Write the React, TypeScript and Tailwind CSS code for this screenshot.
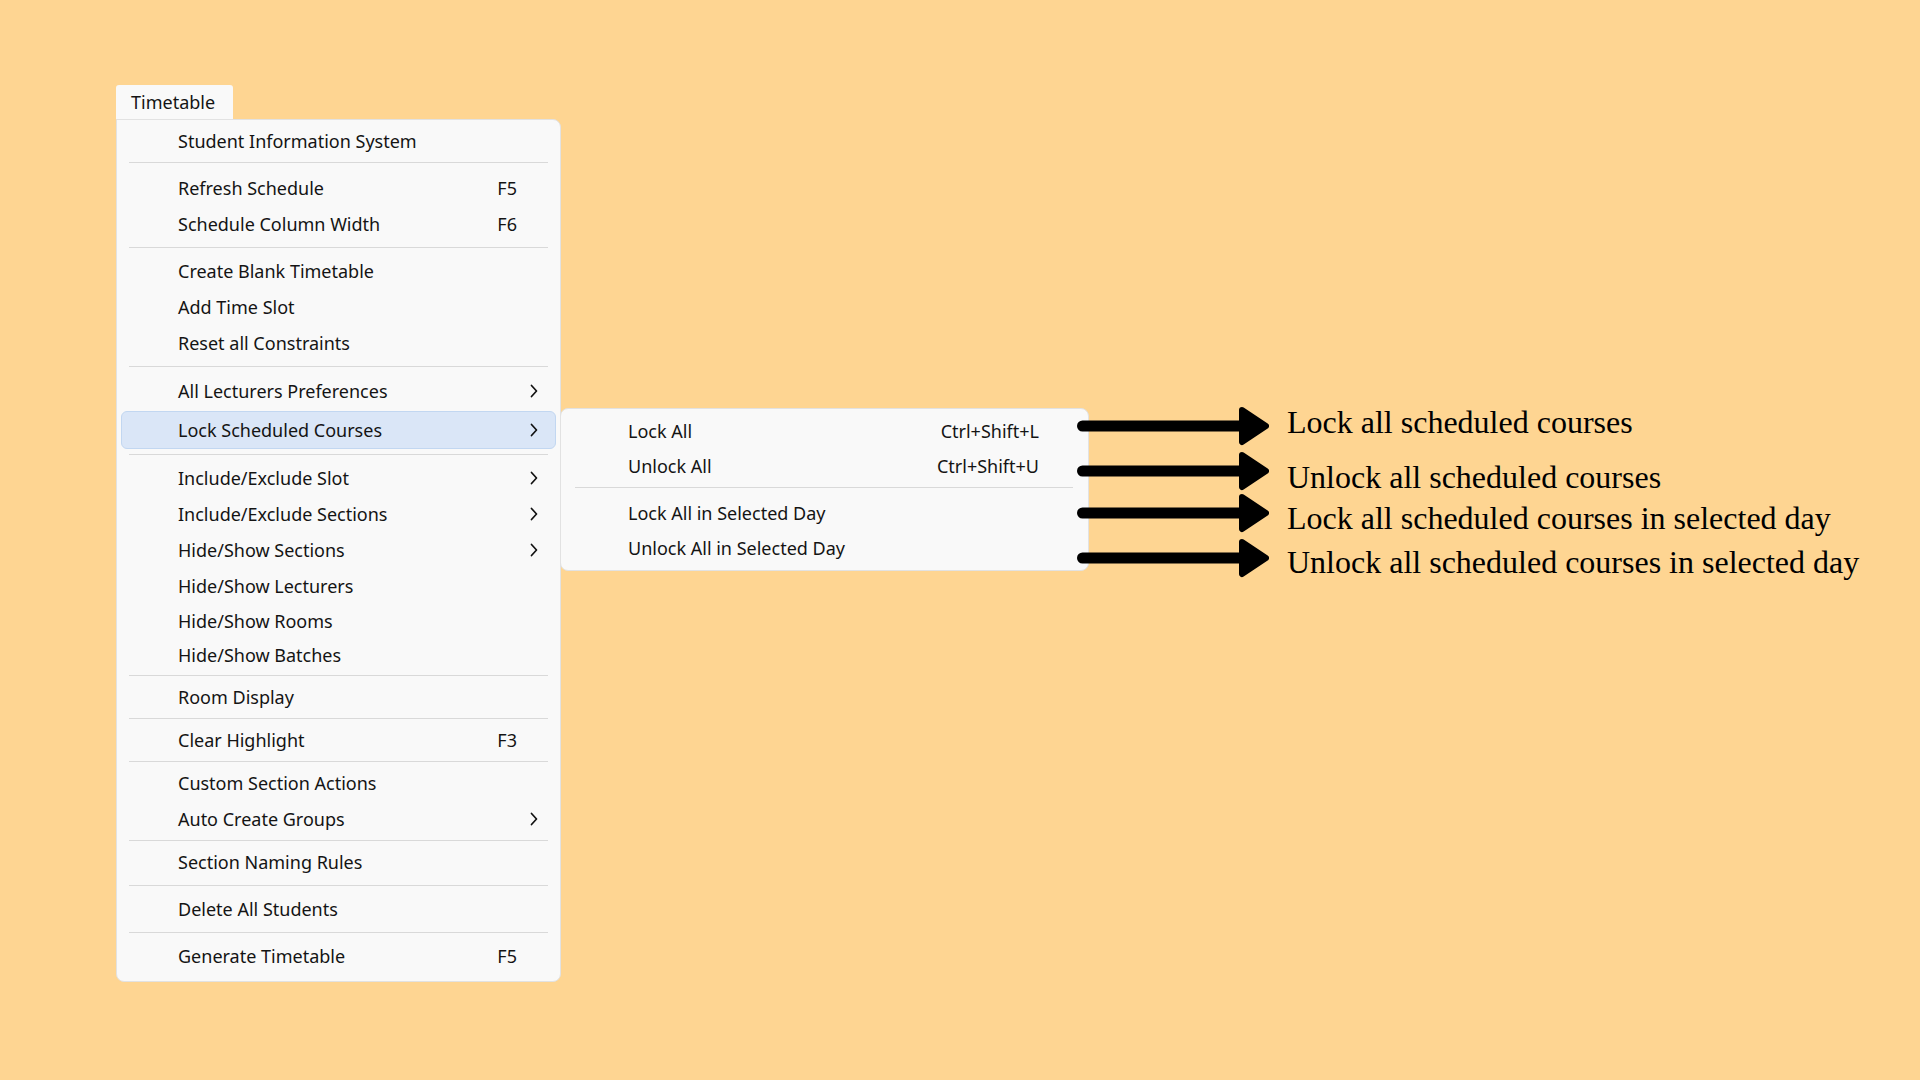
import React from "react";

type Entry =
  | { kind: "item"; label: string; h: string; shortcut?: string; sub?: boolean; active?: boolean }
  | { kind: "sep"; m: string };

const item = (label: string, h: string, extra: Partial<{ shortcut: string; sub: boolean; active: boolean }> = {}): Entry => ({
  kind: "item",
  label,
  h,
  ...extra,
});
const sep = (m: string): Entry => ({ kind: "sep", m });

const mainMenu: Entry[] = [
  item("Student Information System", "h-[36px]"),
  sep("mt-[3px] mb-[7px]"),
  item("Refresh Schedule", "h-[36px]", { shortcut: "F5" }),
  item("Schedule Column Width", "h-[36px]", { shortcut: "F6" }),
  sep("my-[5px]"),
  item("Create Blank Timetable", "h-[36px]"),
  item("Add Time Slot", "h-[36px]"),
  item("Reset all Constraints", "h-[36px]"),
  sep("my-[5px]"),
  item("All Lecturers Preferences", "h-[38px]", { sub: true }),
  item("Lock Scheduled Courses", "h-[38px] my-[1px]", { sub: true, active: true }),
  sep("my-[5px]"),
  item("Include/Exclude Slot", "h-[36px]", { sub: true }),
  item("Include/Exclude Sections", "h-[36px]", { sub: true }),
  item("Hide/Show Sections", "h-[36px]", { sub: true }),
  item("Hide/Show Lecturers", "h-[35px]"),
  item("Hide/Show Rooms", "h-[35px]"),
  item("Hide/Show Batches", "h-[34px]"),
  sep("my-[3px]"),
  item("Room Display", "h-[36px]"),
  sep("my-[3px]"),
  item("Clear Highlight", "h-[36px]", { shortcut: "F3" }),
  sep("my-[3px]"),
  item("Custom Section Actions", "h-[36px]"),
  item("Auto Create Groups", "h-[36px]", { sub: true }),
  sep("my-[3px]"),
  item("Section Naming Rules", "h-[36px]"),
  sep("my-[5px]"),
  item("Delete All Students", "h-[36px]"),
  sep("my-[5px]"),
  item("Generate Timetable", "h-[36px]", { shortcut: "F5" }),
];

const subMenu: Entry[] = [
  item("Lock All", "h-[36px]", { shortcut: "Ctrl+Shift+L" }),
  item("Unlock All", "h-[34px]", { shortcut: "Ctrl+Shift+U" }),
  sep("mt-[4px] mb-[7px]"),
  item("Lock All in Selected Day", "h-[36px]"),
  item("Unlock All in Selected Day", "h-[34px]"),
];

const notes = [
  { text: "Lock all scheduled courses", row: "", shift: "mb-[8px]" },
  { text: "Unlock all scheduled courses", row: "mt-[5px]", shift: "mt-[12px]" },
  { text: "Lock all scheduled courses in selected day", row: "mt-[2px]", shift: "mt-[10px]" },
  { text: "Unlock all scheduled courses in selected day", row: "mt-[5px]", shift: "mt-[8px]" },
];

function Chevron() {
  return (
    <svg width="10" height="14" viewBox="0 0 10 14" fill="none">
      <path d="M2.5 1.5 L7.5 7 L2.5 12.5" stroke="#111" strokeWidth="1.7" strokeLinecap="round" strokeLinejoin="round" />
    </svg>
  );
}

function Arrow() {
  return (
    <svg width="192" height="40" viewBox="0 0 192 40" className="shrink-0">
      <line x1="5.5" y1="20" x2="168" y2="20" stroke="black" strokeWidth="11" strokeLinecap="round" />
      <polygon points="165,4 189,20 165,36" fill="black" stroke="black" strokeWidth="6" strokeLinejoin="round" />
    </svg>
  );
}

function MainRow({ e }: { e: Extract<Entry, { kind: "item" }> }) {
  return (
    <div
      className={`${e.h} flex items-center rounded-[6px] border pl-[56px] ${
        e.active ? "bg-[#dae6f7] border-[#c2d7f1]" : "border-transparent"
      }`}
    >
      <span className="flex-1">{e.label}</span>
      {e.shortcut && <span>{e.shortcut}</span>}
      <span className="w-[38px] pr-[5px] flex justify-center">{e.sub && <Chevron />}</span>
    </div>
  );
}

function SubRow({ e }: { e: Extract<Entry, { kind: "item" }> }) {
  return (
    <div className={`${e.h} flex items-center pl-[63px] pr-[45px]`}>
      <span className="flex-1">{e.label}</span>
      {e.shortcut && <span>{e.shortcut}</span>}
    </div>
  );
}

export default function App() {
  return (
    <div className="w-[1920px] h-[1080px] bg-[#fed592] pl-[116px] pt-[85px] flex items-start font-['Noto_Sans',sans-serif] text-[18px] leading-none text-[#141414]">
      {/* main menu with its tab */}
      <div className="flex flex-col">
        <div className="w-[117px] h-[34px] bg-[#f9f9f9] rounded-t-[3px] pl-[15px] flex items-center">Timetable</div>
        <div className="w-[445px] bg-[#f9f9f9] border border-[#e2e2e2] rounded-b-[8px] rounded-tr-[8px] px-[4px] pt-[3px] pb-[7px]">
          {mainMenu.map((e, i) =>
            e.kind === "sep" ? (
              <div key={i} className={`${e.m} mx-[8px] h-px bg-[#d9d9d9]`} />
            ) : (
              <MainRow key={i} e={e} />
            )
          )}
        </div>
      </div>

      {/* Lock Scheduled Courses submenu */}
      <div className="ml-[-1px] mt-[323px] w-[529px] bg-[#f9f9f9] border border-[#e2e2e2] rounded-[8px] px-[4px] pt-[4px] pb-[5px]">
        {subMenu.map((e, i) =>
          e.kind === "sep" ? (
            <div key={i} className={`${e.m} ml-[10px] mr-[11px] h-px bg-[#d9d9d9]`} />
          ) : (
            <SubRow key={i} e={e} />
          )
        )}
      </div>

      {/* arrows and notes */}
      <div className="ml-[-12px] mt-[321px] flex flex-col">
        {notes.map((n) => (
          <div key={n.text} className={`${n.row} h-[40px] flex items-center gap-[18px]`}>
            <Arrow />
            <span className={`${n.shift} whitespace-nowrap font-['Liberation_Serif',serif] text-[32px] leading-none text-black`}>
              {n.text}
            </span>
          </div>
        ))}
      </div>
    </div>
  );
}
